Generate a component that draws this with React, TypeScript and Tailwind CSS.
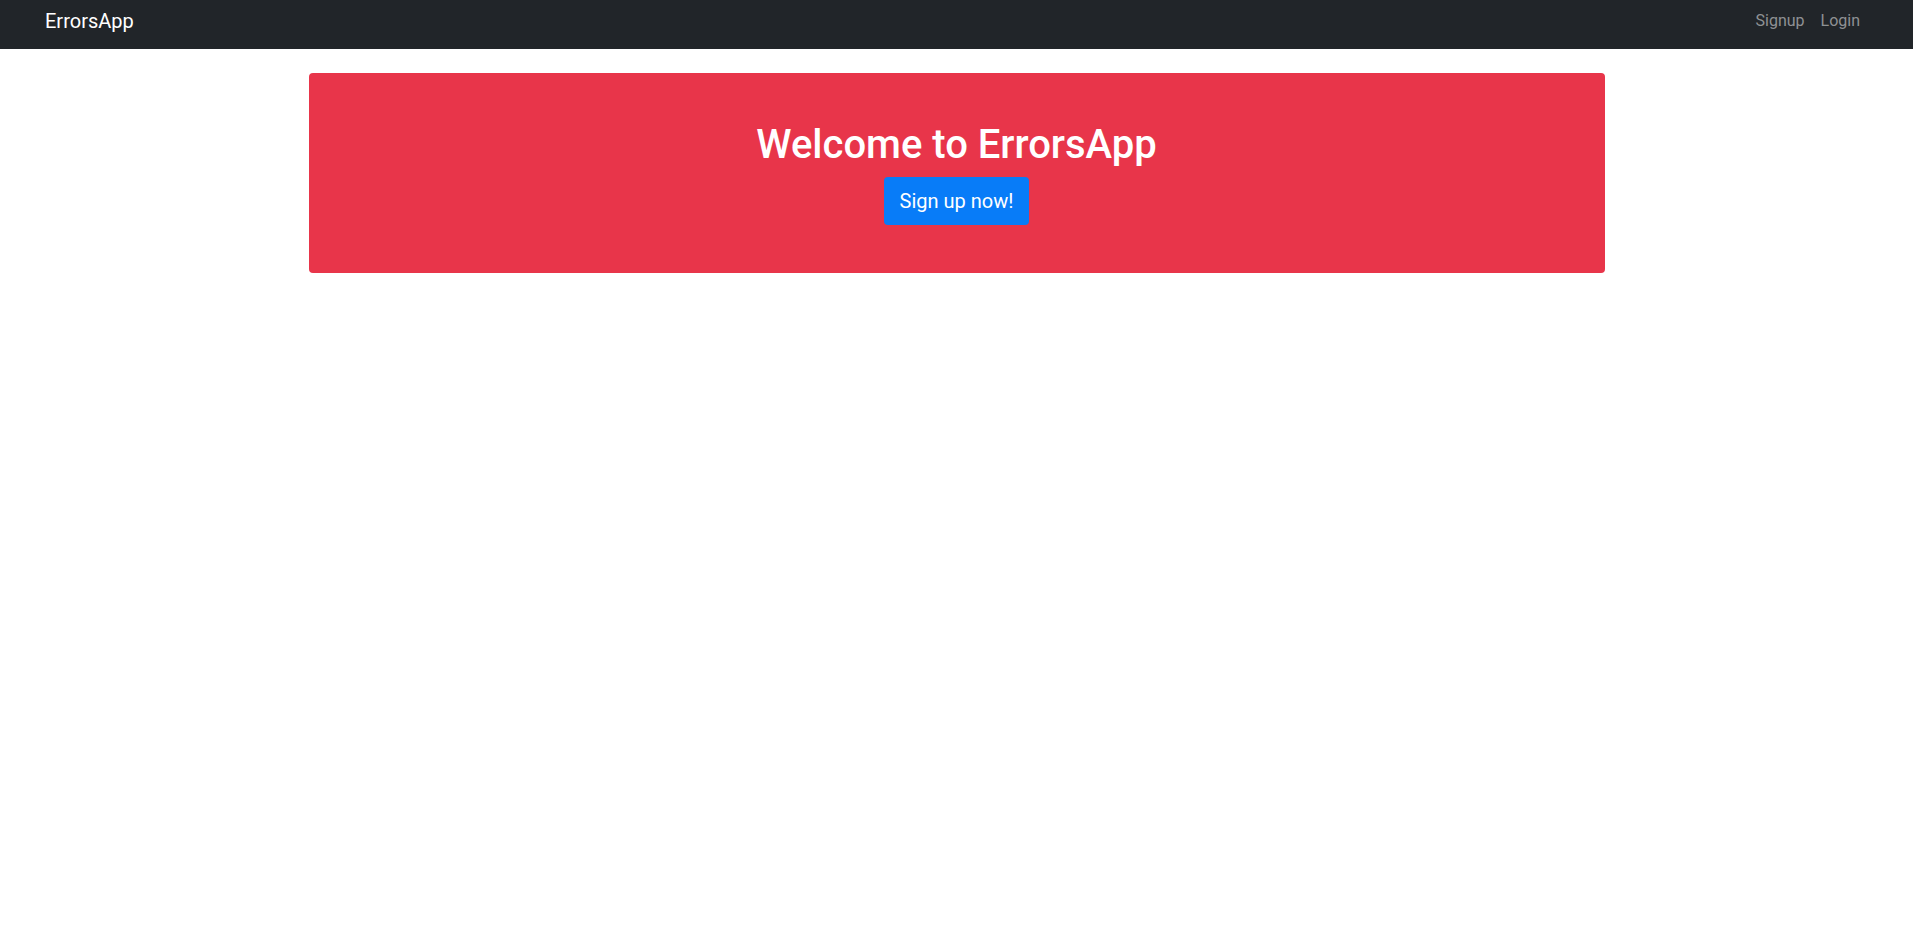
export default function App() {
  return (
    <div className="min-h-screen bg-white font-['Roboto','Liberation_Sans',sans-serif]">
      {/* Navbar */}
      <nav className="h-[49px] bg-[#212529] flex items-center justify-between px-[45px] pb-[8px]">
        <a className="text-[20px] leading-[30px] text-white">ErrorsApp</a>
        <div className="flex items-center">
          <a className="px-2 text-[16px] leading-6 text-[#8f9194]">Signup</a>
          <a className="px-2 text-[16px] leading-6 text-[#8f9194]">Login</a>
        </div>
      </nav>

      {/* Hero */}
      <div className="w-[1296px] mx-auto mt-[24px]">
        <div className="bg-[#e8354a] rounded-[4px] py-12 flex flex-col items-center">
          <h1 className="text-[40px] leading-[48px] font-medium text-white mb-2">Welcome to ErrorsApp</h1>
          <button className="bg-[#087cf8] text-white text-[20px] leading-[30px] px-4 py-[9px] rounded-[4px]">
            Sign up now!
          </button>
        </div>
      </div>
    </div>
  );
}
